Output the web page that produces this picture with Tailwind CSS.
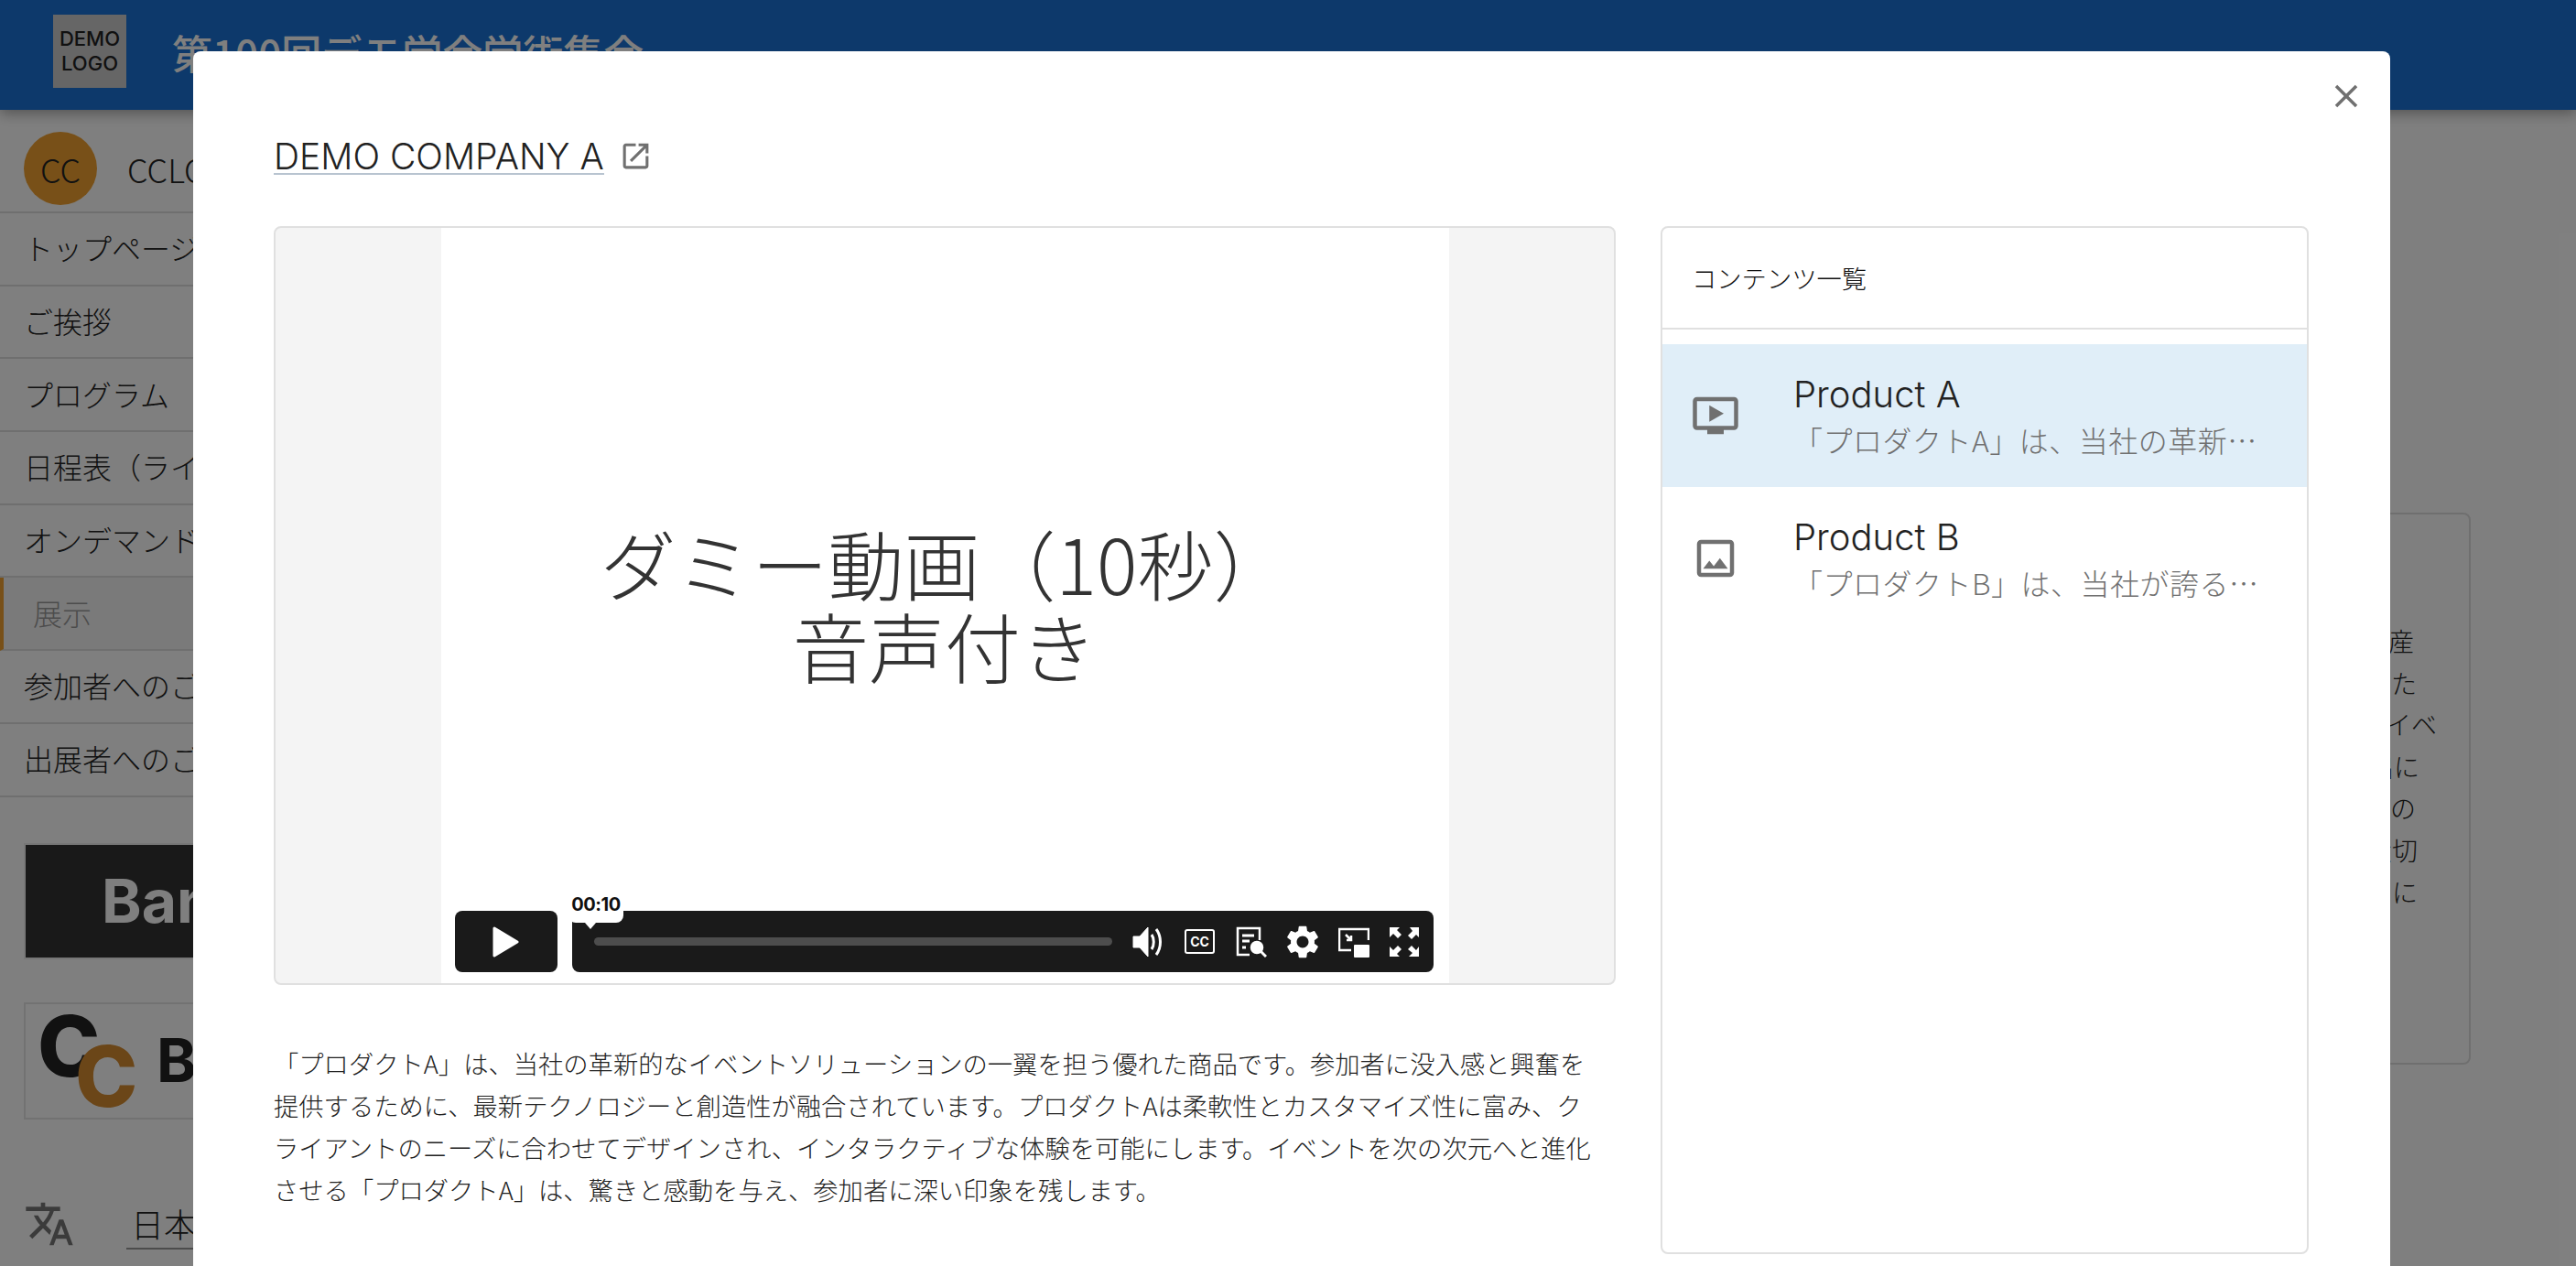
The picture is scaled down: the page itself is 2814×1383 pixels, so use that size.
<!DOCTYPE html>
<html lang="ja">
<head>
<meta charset="utf-8">
<script src="https://cdn.jsdelivr.net/npm/@tailwindcss/browser@4"></script>
</head>
<body class="m-0 overflow-hidden bg-white">
<div class="relative w-[2814px] h-[1383px] overflow-hidden bg-white text-[#222] font-['Noto_Sans_CJK_JP','Noto_Sans',sans-serif] font-light">

  <!-- page behind -->
  <header class="relative z-10 h-[120px] bg-[#1a72d6] shadow-[0_4px_14px_rgba(0,0,0,0.35)] flex items-start pt-4 pl-[58px]">
    <div class="w-[80px] h-[80px] bg-[#ccc] flex items-center justify-center text-center text-[#222] text-[22px] leading-[27px] font-medium font-['Inter',sans-serif]">DEMO<br>LOGO</div>
    <div class="ml-[50px] mt-[8px] text-white text-[44px] leading-[66px] font-medium">第100回デモ学会学術集会</div>
  </header>

  <div class="flex h-[1263px]">
    <aside class="w-[400px] shrink-0">
      <div class="h-[113px] flex items-center pl-[26px] pt-[16px] border-b-2 border-[#dedede]">
        <div class="w-[80px] h-[80px] rounded-full bg-[#f0a030] flex items-center justify-center text-[36px]">CC</div>
        <span class="ml-[33px] text-[36px]">CCLOUD</span>
      </div>
      <nav class="text-[32px]">
        <div class="h-[79.7px] flex items-center pl-[26px] pb-[3px] border-b-2 border-[#dedede]">トップページ</div>
        <div class="h-[79.7px] flex items-center pl-[26px] pb-[3px] border-b-2 border-[#dedede]">ご挨拶</div>
        <div class="h-[79.7px] flex items-center pl-[26px] pb-[3px] border-b-2 border-[#dedede]">プログラム</div>
        <div class="h-[79.7px] flex items-center pl-[26px] pb-[3px] border-b-2 border-[#dedede]">日程表（ライブ）</div>
        <div class="h-[79.7px] flex items-center pl-[26px] pb-[3px] border-b-2 border-[#dedede]">オンデマンド</div>
        <div class="h-[79.7px] flex items-center pl-[32px] pb-[3px] border-l-4 border-l-[#f0a030] border-b-2 border-b-[#dedede] bg-[#f5f5f5] text-[#999]">展示</div>
        <div class="h-[79.7px] flex items-center pl-[26px] pb-[3px] border-b-2 border-[#dedede]">参加者へのご案内</div>
        <div class="h-[79.7px] flex items-center pl-[26px] pb-[3px] border-b-2 border-[#dedede]">出展者へのご案内</div>
      </nav>
      <div class="ml-[26px] mt-[50px] w-[360px] h-[127px] bg-[#333] border-2 border-[#eee] flex items-center pl-[83px] text-white text-[66px] font-bold font-['Inter',sans-serif]">Banner</div>
      <div class="ml-[26px] mt-[47px] w-[360px] h-[128px] border-2 border-[#e4e4e4] flex items-center pl-[143px] text-[66px] font-bold font-['Inter',sans-serif] text-[#222] relative">
        <span class="absolute left-[13px] top-[-12px] text-[92px] leading-[116px] font-extrabold">C</span>
        <span class="absolute left-[54px] top-[21px] text-[92px] leading-[116px] font-extrabold text-[#d68c30]">C</span>
        <span>Banner</span>
      </div>
      <div class="ml-[26px] mt-[86px] flex items-center">
        <svg class="w-[56px] h-[56px] text-[#777]" viewBox="0 0 24 24" fill="currentColor"><path d="M12.87 15.07l-2.54-2.51.03-.03c1.74-1.94 2.98-4.17 3.71-6.53H17V4h-7V2H8v2H1v1.99h11.17C11.5 7.92 10.44 9.75 9 11.35 8.07 10.32 7.3 9.19 6.69 8h-2c.73 1.63 1.73 3.17 2.98 4.56l-5.09 5.02L4 19l5-5 3.11 3.11.76-2.04zM18.5 10h-2L12 22h2l1.12-3h4.75L21 22h2l-4.5-12zm-2.62 7l1.62-4.33L19.12 17h-3.24z"/></svg>
        <div class="ml-[56px] w-[200px] pl-[5px] text-[36px] leading-[54px] border-b-2 border-[#999]">日本語</div>
      </div>
    </aside>
    <main class="flex-1 relative">
      <div class="ml-auto mr-[115px] mt-[440px] w-[600px] h-[603px] border-2 border-[#dedede] rounded-lg pt-[116px] text-[28px] leading-[45.6px] text-right whitespace-nowrap overflow-hidden">
        <div class="pr-[60px]">当社は高品質な製品を生産</div>
        <div class="pr-[57px]">を持って開発されてきた</div>
        <div class="pr-[35px]">多様なニーズに応えイベ</div>
        <div class="pr-[54px]">魅力的な空間の演出に</div>
        <div class="pr-[58px]">皆様のご来場と成功の</div>
        <div class="pr-[56px]">お客様との絆を大切</div>
        <div class="pr-[56px]">出展者の成功に尽力に</div>
      </div>
    </main>
  </div>

  <!-- overlay -->
  <div class="absolute inset-0 z-20 bg-black/50"></div>

  <!-- modal -->
  <div class="absolute z-30 left-[211px] top-[56px] w-[2400px] h-[1400px] bg-white rounded-t-lg pl-[88px] pr-[89px]">
    <svg class="absolute left-[2331px] top-[28px] w-[42px] h-[42px] text-[#707070]" viewBox="0 0 24 24" fill="currentColor"><path d="M19 6.41L17.59 5 12 10.59 6.41 5 5 6.41 10.59 12 5 17.59 6.41 19 12 13.41 17.59 19 19 17.59 13.41 12z"/></svg>

    <div class="h-[191px] pt-[97px] flex items-start">
      <span class="text-[39px] leading-[36px] h-[38px] border-b-2 border-[#b8c4d0] text-[#222] font-['Inter','Noto_Sans_CJK_JP',sans-serif] font-light">DEMO COMPANY A</span>
      <svg class="ml-[16px] -mt-[1px] w-[37px] h-[37px] text-[#707070]" viewBox="0 0 24 24" fill="currentColor"><path d="M19 19H5V5h7V3H5c-1.11 0-2 .9-2 2v14c0 1.1.89 2 2 2h14c1.1 0 2-.9 2-2v-7h-2v7zM14 3v2h3.59l-9.83 9.83 1.41 1.41L19 6.41V10h2V3h-7z"/></svg>
    </div>

    <div class="flex gap-[49px] items-start">
      <div class="w-[1466px]">
        <div class="relative h-[829px] border-2 border-[#e0e0e0] rounded-lg bg-[#f4f4f4] flex justify-center overflow-hidden">
          <div class="w-[1101px] bg-white flex flex-col items-center justify-center pb-[6px] text-[#333] text-[83px] leading-[90px] font-light">
            <div>ダミー動画（10秒）</div>
            <div>音声付き</div>
          </div>
          <div class="absolute left-[196px] top-[746px] w-[112px] h-[67px] bg-[#1a1a1a] rounded-lg flex items-center justify-center">
            <svg class="w-[30px] h-[36px]" viewBox="0 0 30 36"><path d="M2 3 L27 18 L2 33 Z" fill="#fff" stroke="#fff" stroke-width="3" stroke-linejoin="round"/></svg>
          </div>
          <div class="absolute left-[324px] top-[746px] w-[941px] h-[67px] bg-[#1a1a1a] rounded-lg flex items-center">
            <div class="ml-[24px] w-[566px] h-[9px] rounded-full bg-[#4d4d4d]"></div>
            <div class="ml-[22px] flex items-center gap-[23px]">
              <svg class="w-[34px] h-[34px]" viewBox="0 0 34 34" fill="none"><path d="M1 11h7L17 1v32L8 23H1z" fill="#fff" stroke="#fff" stroke-linejoin="round"/><path d="M21 9c3 4 3 12 0 16" stroke="#fff" stroke-width="3"/><path d="M26 3c6 8 6 20 0 28" stroke="#fff" stroke-width="3"/></svg>
              <div class="w-[33px] h-[27px] border-2 border-white rounded-[3px] flex items-center justify-center text-white text-[14px] font-bold font-['Inter',sans-serif]">CC</div>
              <svg class="w-[34px] h-[34px]" viewBox="0 0 34 34" fill="none" stroke="#fff" stroke-width="2.5"><path d="M26 15V2H2v29h13"/><path d="M7 10h13M7 16h8M7 23h4" stroke-width="3"/><circle cx="23" cy="23" r="6" fill="#fff"/><path d="M27 27l6 6" stroke-width="3"/></svg>
              <svg class="w-[36px] h-[36px] -mx-[2px]" viewBox="2 2 20 20" fill="#fff"><path d="M19.14 12.94c.04-.3.06-.61.06-.94 0-.32-.02-.64-.07-.94l2.03-1.58c.18-.14.23-.41.12-.61l-1.92-3.32c-.12-.22-.37-.29-.59-.22l-2.39.96c-.5-.38-1.03-.7-1.62-.94l-.36-2.54c-.04-.24-.24-.41-.48-.41h-3.84c-.24 0-.43.17-.47.41l-.36 2.54c-.59.24-1.13.57-1.62.94l-2.39-.96c-.22-.08-.47 0-.59.22L2.74 8.87c-.12.21-.08.47.12.61l2.03 1.58c-.05.3-.09.63-.09.94s.02.64.07.94l-2.03 1.58c-.18.14-.23.41-.12.61l1.92 3.32c.12.22.37.29.59.22l2.39-.96c.5.38 1.03.7 1.62.94l.36 2.54c.05.24.24.41.48.41h3.84c.24 0 .44-.17.47-.41l.36-2.54c.59-.24 1.13-.56 1.62-.94l2.39.96c.22.08.47 0 .59-.22l1.92-3.32c.12-.22.07-.47-.12-.61l-2.01-1.58zM12 15.6c-1.98 0-3.6-1.62-3.6-3.6s1.62-3.6 3.6-3.6 3.6 1.62 3.6 3.6-1.62 3.6-3.6 3.6z"/></svg>
              <svg class="w-[34px] h-[34px]" viewBox="0 0 34 34" fill="none" stroke="#fff" stroke-width="2.5"><path d="M14 26H1V3h32v12"/><path d="M8 9l6 6M14 10v5H9" stroke-width="2.5"/><rect x="17" y="20" width="17" height="14" rx="1" fill="#fff" stroke="none"/></svg>
              <svg class="w-[32px] h-[32px] -ml-[1px]" viewBox="0 0 32 32" fill="#fff"><path d="M0 0h11l-3 3 5 5-4 4-5-5-4 4zM32 0v11l-3-3-5 5-4-4 5-5-3-4zM0 32V21l4 4 5-5 4 4-5 5 3 3zM32 32H21l4-4-5-4 4-4 5 5 3-4z"/></svg>
            </div>
          </div>
          <div class="absolute left-[320px] top-[720px] w-[60px] h-[39px] pt-[6px] bg-white rounded-b-lg flex items-start justify-center text-[#111] text-[20px] leading-[26px] font-bold font-['Inter',sans-serif] tracking-[-0.5px]">00:10</div>
          <div class="absolute left-[338px] top-[759px] w-0 h-0 border-l-[6px] border-r-[6px] border-t-[7px] border-l-transparent border-r-transparent border-t-white"></div>
        </div>
        <p class="mt-[62px] text-[27.3px] leading-[46px] whitespace-nowrap text-[#222] font-light">「プロダクトA」は、当社の革新的なイベントソリューションの一翼を担う優れた商品です。参加者に没入感と興奮を<br>提供するために、最新テクノロジーと創造性が融合されています。プロダクトAは柔軟性とカスタマイズ性に富み、ク<br>ライアントのニーズに合わせてデザインされ、インタラクティブな体験を可能にします。イベントを次の次元へと進化<br>させる「プロダクトA」は、驚きと感動を与え、参加者に深い印象を残します。</p>
      </div>

      <div class="w-[708px] h-[1123px] border-2 border-[#e0e0e0] rounded-lg">
        <div class="h-[111px] pl-[32px] flex items-center border-b-2 border-[#e0e0e0] text-[27.3px] text-[#111] font-light">コンテンツ一覧</div>
        <div class="mt-[16px]">
          <div class="h-[156px] bg-[#e0eef8] flex items-center pl-[31px]">
            <svg class="w-[54px] h-[54px] shrink-0 text-[#707070]" viewBox="0 0 24 24" fill="currentColor"><path d="M21 3H3c-1.11 0-2 .89-2 2v12c0 1.1.89 2 2 2h5v2h8v-2h5c1.1 0 1.99-.9 1.99-2L23 5c0-1.11-.9-2-2-2zm0 14H3V5h18v12zm-5-6l-7 4V7z"/></svg>
            <div class="ml-[58px] min-w-0">
              <div class="text-[40px] leading-[52px] text-[#222] font-['Inter','Noto_Sans_CJK_JP',sans-serif] font-light">Product A</div>
              <div class="text-[32px] leading-[46px] tracking-[0.5px] text-[#707070] whitespace-nowrap">「プロダクトA」は、当社の革新…</div>
            </div>
          </div>
          <div class="h-[156px] flex items-center pl-[31px]">
            <svg class="w-[54px] h-[54px] shrink-0 text-[#707070]" viewBox="0 0 24 24" fill="currentColor"><path d="M19 5v14H5V5h14m0-2H5c-1.1 0-2 .9-2 2v14c0 1.1.9 2 2 2h14c1.1 0 2-.9 2-2V5c0-1.1-.9-2-2-2zm-4.86 8.86l-3 3.87L9 13.14 6 17h12l-3.86-5.14z"/></svg>
            <div class="ml-[58px] min-w-0">
              <div class="text-[40px] leading-[52px] text-[#222] font-['Inter','Noto_Sans_CJK_JP',sans-serif] font-light">Product B</div>
              <div class="text-[32px] leading-[46px] tracking-[0.5px] text-[#707070] whitespace-nowrap">「プロダクトB」は、当社が誇る…</div>
            </div>
          </div>
        </div>
      </div>
    </div>
  </div>
</div>
</body>
</html>
